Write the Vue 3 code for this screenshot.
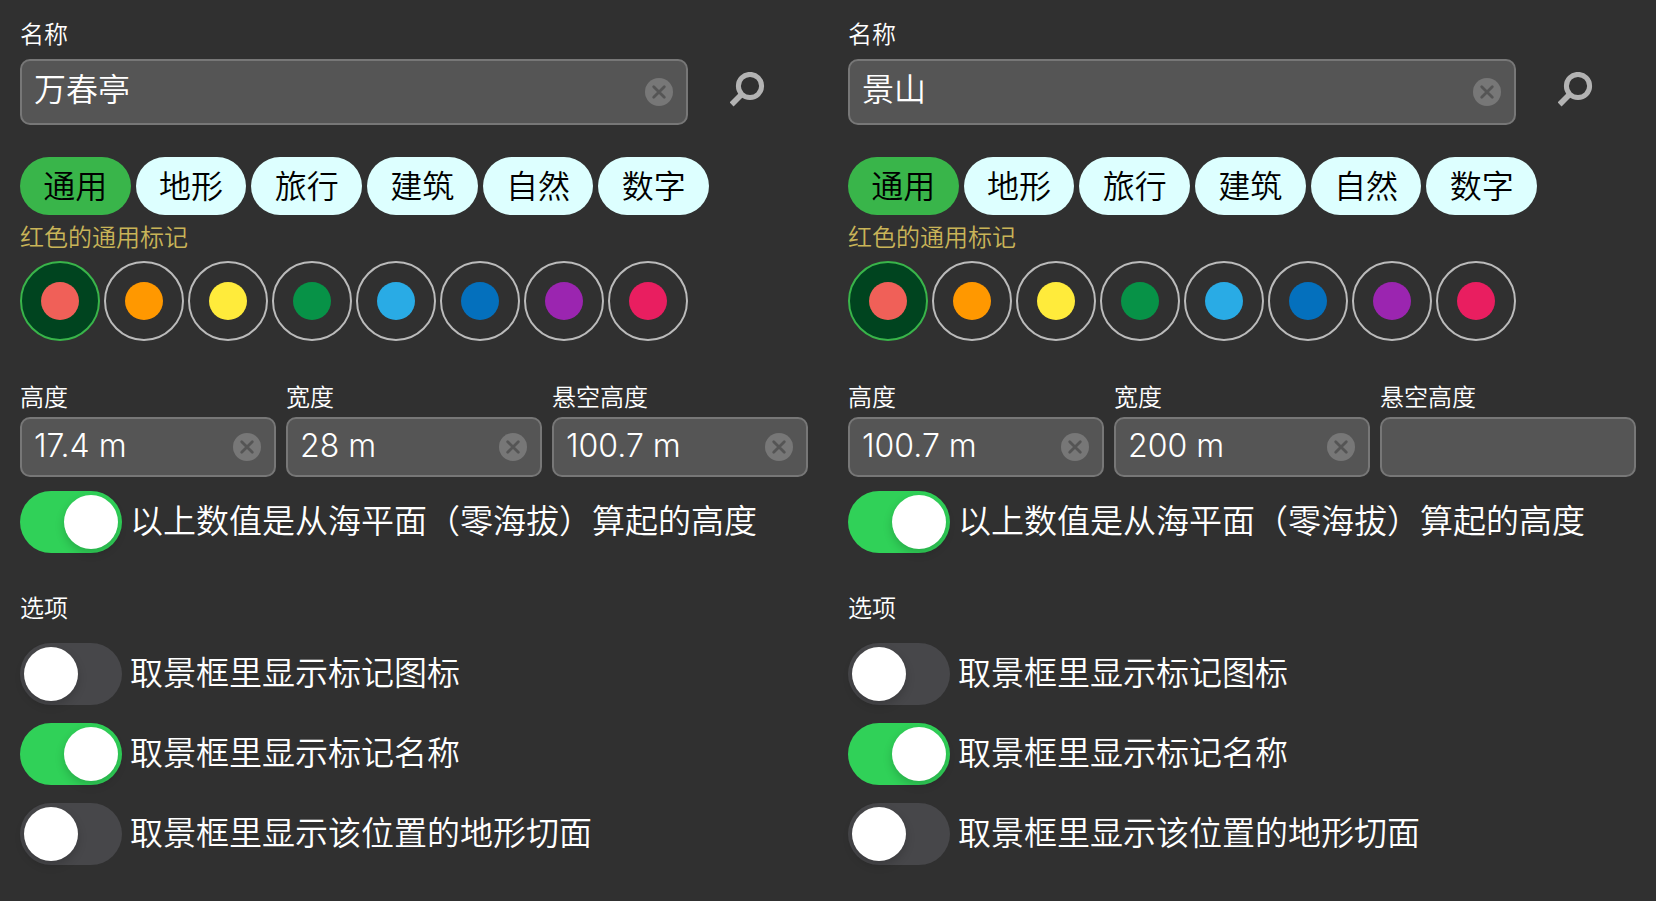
<script setup>
import { reactive } from 'vue'

const categories = ['通用', '地形', '旅行', '建筑', '自然', '数字']

const colors = [
  { name: '红色', value: '#f06058' },
  { name: '橙色', value: '#ff9800' },
  { name: '黄色', value: '#ffeb3b' },
  { name: '绿色', value: '#079247' },
  { name: '浅蓝色', value: '#29abe5' },
  { name: '蓝色', value: '#0470bd' },
  { name: '紫色', value: '#9b25b0' },
  { name: '粉色', value: '#e91e60' },
]

const makePanel = (id, name, height, width, lift) => ({
  id,
  name,
  category: '通用',
  color: '红色',
  sizes: [
    { key: 'height', label: '高度', value: height },
    { key: 'width', label: '宽度', value: width },
    { key: 'lift', label: '悬空高度', value: lift },
  ],
  seaLevel: true,
  options: [
    { key: 'icon', label: '取景框里显示标记图标', on: false },
    { key: 'name', label: '取景框里显示标记名称', on: true },
    { key: 'section', label: '取景框里显示该位置的地形切面', on: false },
  ],
})

const panels = reactive([
  makePanel('a', '万春亭', '17.4 m', '28 m', '100.7 m'),
  makePanel('b', '景山', '100.7 m', '200 m', ''),
])
</script>

<template>
  <main class="screen">
    <form v-for="p in panels" :key="p.id" class="panel" @submit.prevent>
      <label class="label" :for="p.id + '-name'">名称</label>
      <div class="name-row">
        <div class="field field-name">
          <input :id="p.id + '-name'" v-model="p.name" type="text" />
          <button v-if="p.name" class="clear" type="button" aria-label="清除" @click="p.name = ''">
            <svg viewBox="0 0 28 28"><circle cx="14" cy="14" r="14" /><path d="M8.7 8.7 19.3 19.3M19.3 8.7 8.7 19.3" /></svg>
          </button>
        </div>
        <button class="search" type="submit" aria-label="搜索">
          <svg viewBox="0 0 36 36"><circle cx="20" cy="14" r="11.6" /><path d="M12 22 1.6 32.4" /></svg>
        </button>
      </div>

      <div class="chips">
        <button
          v-for="c in categories"
          :key="c"
          type="button"
          class="chip"
          :class="{ active: p.category === c }"
          @click="p.category = c"
        >{{ c }}</button>
      </div>

      <p class="hint">{{ p.color }}的{{ p.category }}标记</p>

      <div class="swatches">
        <button
          v-for="c in colors"
          :key="c.name"
          type="button"
          class="swatch"
          :class="{ active: p.color === c.name }"
          :aria-label="c.name"
          @click="p.color = c.name"
        ><span class="dot" :style="{ background: c.value }"></span></button>
      </div>

      <div class="sizes">
        <div v-for="s in p.sizes" :key="s.key" class="size">
          <label class="label" :for="p.id + '-' + s.key">{{ s.label }}</label>
          <div class="field">
            <input :id="p.id + '-' + s.key" v-model="s.value" type="text" />
            <button v-if="s.value" class="clear" type="button" aria-label="清除" @click="s.value = ''">
              <svg viewBox="0 0 28 28"><circle cx="14" cy="14" r="14" /><path d="M8.7 8.7 19.3 19.3M19.3 8.7 8.7 19.3" /></svg>
            </button>
          </div>
        </div>
      </div>

      <label class="toggle">
        <input v-model="p.seaLevel" class="switch" type="checkbox" role="switch" />
        <span class="toggle-text">以上数值是从海平面（零海拔）算起的高度</span>
      </label>

      <fieldset class="options">
        <legend class="label">选项</legend>
        <label v-for="o in p.options" :key="o.key" class="toggle">
          <input v-model="o.on" class="switch" type="checkbox" role="switch" />
          <span class="toggle-text">{{ o.label }}</span>
        </label>
      </fieldset>
    </form>
  </main>
</template>

<style>
body {
  margin: 0;
  background: #303030;
}
</style>

<style scoped>
.screen {
  display: grid;
  grid-template-columns: repeat(2, minmax(0, 1fr));
  min-height: 100vh;
  box-sizing: border-box;
  background: #303030;
  color: #fff;
  font-family: Inter, "Noto Sans CJK SC", sans-serif;
  font-weight: 350;
  font-size: 32px;
}
.panel {
  padding: 20px 20px 32px;
}
.label {
  display: block;
  padding: 0;
  font-size: 24px;
  line-height: 29px;
}
.name-row {
  display: flex;
  margin-top: 10px;
}
.field {
  display: flex;
  align-items: center;
  box-sizing: border-box;
  height: 60px;
  padding: 0 13px 0 12px;
  border: 2px solid #777;
  border-radius: 10px;
  background: #555;
}
.field-name {
  flex: 1;
  height: 66px;
}
.field input {
  flex: 1;
  min-width: 0;
  height: 100%;
  box-sizing: border-box;
  padding: 0 0 4px;
  border: 0;
  outline: 0;
  background: none;
  color: inherit;
  font: inherit;
}
.field-name input {
  padding-bottom: 10px;
}
button {
  padding: 0;
  border: 0;
  background: none;
  color: inherit;
  font: inherit;
  cursor: pointer;
}
.clear,
.clear svg {
  display: block;
  width: 28px;
  height: 28px;
}
.clear circle {
  fill: #777;
}
.clear path {
  fill: none;
  stroke: #555;
  stroke-width: 2.8;
  stroke-linecap: round;
}
.search {
  display: flex;
  align-items: center;
  justify-content: center;
  width: 120px;
  padding-bottom: 4px;
}
.search svg {
  width: 36px;
  height: 36px;
}
.search circle,
.search path {
  fill: none;
  stroke: #b3b3b3;
  stroke-width: 5;
}
.search path {
  stroke-width: 5.6;
}
.chips {
  display: grid;
  grid-template-columns: repeat(6, 1fr);
  gap: 5px;
  max-width: 689px;
  margin-top: 32px;
}
.chip {
  height: 58px;
  border-radius: 29px;
  background: #dff;
  color: #000;
  line-height: 60px;
}
.chip.active {
  background: #39b54a;
}
.hint {
  margin: 0;
  color: #c9b458;
  font-size: 24px;
  line-height: 46px;
}
.swatches {
  display: flex;
  gap: 4px;
}
.swatch {
  display: flex;
  align-items: center;
  justify-content: center;
  box-sizing: border-box;
  width: 80px;
  height: 80px;
  border: 2px solid #bbb;
  border-radius: 50%;
}
.swatch.active {
  border-color: #39b54a;
  background: #00441f;
}
.dot {
  width: 38px;
  height: 38px;
  border-radius: 50%;
}
.sizes {
  display: grid;
  grid-template-columns: repeat(3, minmax(0, 1fr));
  gap: 10px;
  margin-top: 42px;
}
.size .field {
  margin-top: 5px;
}
.toggle {
  display: flex;
  align-items: center;
  gap: 8px;
  margin-top: 14px;
}
.toggle-text {
  padding-bottom: 6px;
  font-size: 33px;
}
.switch {
  flex: none;
  appearance: none;
  box-sizing: border-box;
  width: 102px;
  height: 62px;
  margin: 0;
  padding: 4px;
  border-radius: 31px;
  background: #47474a;
}
.switch::before {
  content: "";
  display: block;
  width: 54px;
  height: 54px;
  border-radius: 50%;
  background: #fff;
  box-shadow: 0 4px 10px rgba(0, 0, 0, 0.18);
}
.switch:checked {
  background: #30d158;
}
.switch:checked::before {
  margin-left: auto;
}
.options {
  margin: 41px 0 0;
  padding: 0;
  border: 0;
}
.options .label {
  padding-bottom: 2px;
}
.options .toggle {
  margin-top: 18px;
}
</style>
